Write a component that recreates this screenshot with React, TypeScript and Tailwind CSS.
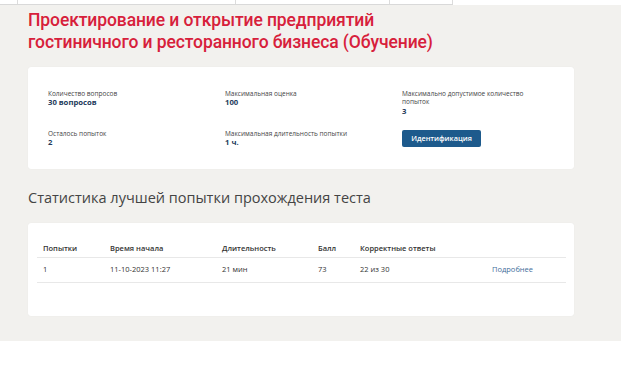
export default function App() {
  const body = { fontFamily: '"Open Sans", "Noto Sans", sans-serif' };
  const val = "text-[7.7px] leading-[8.3px] font-bold text-[#243b5c]";
  return (
    <div className="w-[621px] h-[368px] bg-white overflow-hidden" style={body}>
      <div className="bg-[#f2f1ee] h-[341px] flex flex-col">
        <div className="flex h-[5px]">
          <div className="flex w-[453px] bg-white border-b border-[#d9d9d9]">
            <div className="w-[18px] border-r border-[#dcdcdc]" />
            <div className="w-[218px] border-r border-[#dcdcdc]" />
            <div className="w-[154px] border-r border-[#dcdcdc]" />
            <div className="w-[63px] border-r border-[#dcdcdc]" />
          </div>
          <div className="flex-1 bg-white" />
        </div>
        <div className="px-[28px] pt-[4px]">
          <h1
            className="text-[17.5px] leading-[22px] tracking-[-0.1px] text-[#d7203b] font-medium"
            style={{ fontFamily: '"Roboto", sans-serif' }}
          >
            Проектирование и открытие предприятий
            <br />
            гостиничного и ресторанного бизнеса (Обучение)
          </h1>
        </div>
        <div className="mx-[28px] w-[546px] mt-[14px] bg-white rounded-[3px] shadow-[0_0_1px_rgba(0,0,0,0.08)] h-[102px] pl-[20px] pt-[23px]">
          <div className="grid grid-cols-[177px_177px_128px] grid-rows-[40px_auto] text-[6.5px] leading-[8.3px] text-[#444]">
            <div>
              <div>Количество вопросов</div>
              <div className={val}>30 вопросов</div>
            </div>
            <div>
              <div>Максимальная оценка</div>
              <div className={val}>100</div>
            </div>
            <div>
              <div>Максимально допустимое количество попыток</div>
              <div className={val}>3</div>
            </div>
            <div>
              <div>Осталось попыток</div>
              <div className={val}>2</div>
            </div>
            <div>
              <div>Максимальная длительность попытки</div>
              <div className={val}>1 ч.</div>
            </div>
            <div>
              <button className="w-[79px] h-[17px] rounded-[2px] bg-[#1d5a8c] text-white text-[7.3px] font-semibold flex items-center justify-center">
                Идентификация
              </button>
            </div>
          </div>
        </div>
        <h2 className="px-[28px] mt-[19px] text-[14.5px] leading-[20px] text-[#444] font-normal">
          Статистика лучшей попытки прохождения теста
        </h2>
        <div className="mx-[28px] w-[546px] mt-[15px] bg-white rounded-[3px] shadow-[0_0_1px_rgba(0,0,0,0.08)] h-[93px] px-[9px] pt-[17px]">
          <div className="w-[529px] text-[7.5px] text-[#333]">
            <div className="flex h-[18px] items-center border-b border-[#e8e8e8] font-semibold">
              <div className="w-[73px] pl-[6px]">Попытки</div>
              <div className="w-[112px]">Время начала</div>
              <div className="w-[96px]">Длительность</div>
              <div className="w-[42px]">Балл</div>
              <div className="w-[132px]">Корректные ответы</div>
              <div className="flex-1" />
            </div>
            <div className="flex h-[25px] items-center border-b border-[#e8e8e8]">
              <div className="w-[73px] pl-[6px]">1</div>
              <div className="w-[112px]">11-10-2023 11:27</div>
              <div className="w-[96px]">21 мин</div>
              <div className="w-[42px]">73</div>
              <div className="w-[132px]">22 из 30</div>
              <div className="flex-1 text-[#3f6e9a]">Подробнее</div>
            </div>
          </div>
        </div>
      </div>
    </div>
  );
}
